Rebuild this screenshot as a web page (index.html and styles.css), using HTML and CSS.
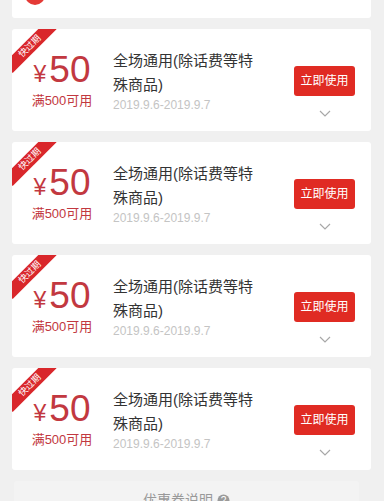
FILE: index.html
```html
<!DOCTYPE html>
<html lang="zh">
<head>
<meta charset="utf-8">
<link rel="stylesheet" href="styles.css">
</head>
<body>
<div class="list">
  <div class="card partial"><span class="dot"></span></div>

  <div class="card">
    <div class="ribbon">快过期</div>
    <div class="left">
      <div class="amount"><span class="yen">¥</span>50</div>
      <div class="cond">满500可用</div>
    </div>
    <div class="mid">
      <div class="title">全场通用(除话费等特殊商品)</div>
      <div class="date">2019.9.6-2019.9.7</div>
    </div>
    <div class="right">
      <div class="btn">立即使用</div>
      <svg class="chev" width="12" height="7" viewBox="0 0 12 7"><path d="M1 1l5 5 5-5" fill="none" stroke="#a8a8a8" stroke-width="1.2"/></svg>
    </div>
  </div>

  <div class="card">
    <div class="ribbon">快过期</div>
    <div class="left">
      <div class="amount"><span class="yen">¥</span>50</div>
      <div class="cond">满500可用</div>
    </div>
    <div class="mid">
      <div class="title">全场通用(除话费等特殊商品)</div>
      <div class="date">2019.9.6-2019.9.7</div>
    </div>
    <div class="right">
      <div class="btn">立即使用</div>
      <svg class="chev" width="12" height="7" viewBox="0 0 12 7"><path d="M1 1l5 5 5-5" fill="none" stroke="#a8a8a8" stroke-width="1.2"/></svg>
    </div>
  </div>

  <div class="card">
    <div class="ribbon">快过期</div>
    <div class="left">
      <div class="amount"><span class="yen">¥</span>50</div>
      <div class="cond">满500可用</div>
    </div>
    <div class="mid">
      <div class="title">全场通用(除话费等特殊商品)</div>
      <div class="date">2019.9.6-2019.9.7</div>
    </div>
    <div class="right">
      <div class="btn">立即使用</div>
      <svg class="chev" width="12" height="7" viewBox="0 0 12 7"><path d="M1 1l5 5 5-5" fill="none" stroke="#a8a8a8" stroke-width="1.2"/></svg>
    </div>
  </div>

  <div class="card">
    <div class="ribbon">快过期</div>
    <div class="left">
      <div class="amount"><span class="yen">¥</span>50</div>
      <div class="cond">满500可用</div>
    </div>
    <div class="mid">
      <div class="title">全场通用(除话费等特殊商品)</div>
      <div class="date">2019.9.6-2019.9.7</div>
    </div>
    <div class="right">
      <div class="btn">立即使用</div>
      <svg class="chev" width="12" height="7" viewBox="0 0 12 7"><path d="M1 1l5 5 5-5" fill="none" stroke="#a8a8a8" stroke-width="1.2"/></svg>
    </div>
  </div>

  <div class="note">
    <span class="note-text">优惠券说明</span>
    <svg class="q" width="13" height="13" viewBox="0 0 13 13"><circle cx="6.5" cy="6.5" r="6" fill="#9a9a9a"/><text x="6.5" y="10" text-anchor="middle" font-size="10" font-family="Liberation Sans, sans-serif" fill="#fff">?</text></svg>
  </div>
</div>
</body>
</html>
```

FILE: styles.css
```css
html, body {
  margin: 0;
  padding: 0;
  background: #f0f0f0;
  font-family: "Liberation Sans", "Noto Sans CJK SC", sans-serif;
}

.list {
  display: flex;
  flex-direction: column;
  gap: 11px;
  padding: 0 13px 0 12px;
}

.card {
  position: relative;
  overflow: hidden;
  display: flex;
  height: 102px;
  background: #fff;
  border-radius: 3px;
}

.card.partial {
  height: 18px;
  border-radius: 0 0 3px 3px;
}

.dot {
  position: absolute;
  left: 13px;
  top: -15px;
  width: 20px;
  height: 20px;
  border-radius: 50%;
  background: #e43a36;
}

.ribbon {
  position: absolute;
  left: -13px;
  top: 11px;
  width: 62px;
  height: 13px;
  line-height: 13px;
  background: #d9272b;
  color: #fff;
  font-size: 9px;
  text-align: center;
  transform: rotate(-45deg);
}

.left {
  width: 100px;
  flex: none;
  display: flex;
  flex-direction: column;
  align-items: center;
  padding-top: 23px;
  color: #c23840;
}

.amount {
  font-size: 37px;
  line-height: 36px;
  height: 36px;
}

.yen {
  font-size: 23px;
  margin-right: 3px;
}

.cond {
  margin-top: 4px;
  font-size: 13px;
  line-height: 18px;
}

.mid {
  width: 150px;
  flex: none;
  margin-left: 1px;
  padding-top: 20px;
}

.title {
  font-size: 15px;
  line-height: 24px;
  color: #333;
}

.date {
  font-size: 12px;
  line-height: 16px;
  color: #c4c4c4;
}

.right {
  margin-left: auto;
  margin-right: 16px;
  width: 61px;
  display: flex;
  flex-direction: column;
  align-items: center;
  padding-top: 37px;
}

.btn {
  width: 61px;
  height: 30px;
  line-height: 30px;
  text-align: center;
  background: #e02b23;
  color: #fff;
  font-size: 12px;
  border-radius: 3px;
}

.chev {
  margin-top: 14px;
}

.note {
  margin: 0 12px 0 2px;
  height: 40px;
  display: flex;
  justify-content: center;
  align-items: flex-start;
  gap: 4px;
  padding-top: 11px;
  background: #f3f3f3;
  border-radius: 3px;
  color: #999;
  font-size: 14px;
  line-height: 16px;
}

.q {
  margin-top: 2px;
}
```
